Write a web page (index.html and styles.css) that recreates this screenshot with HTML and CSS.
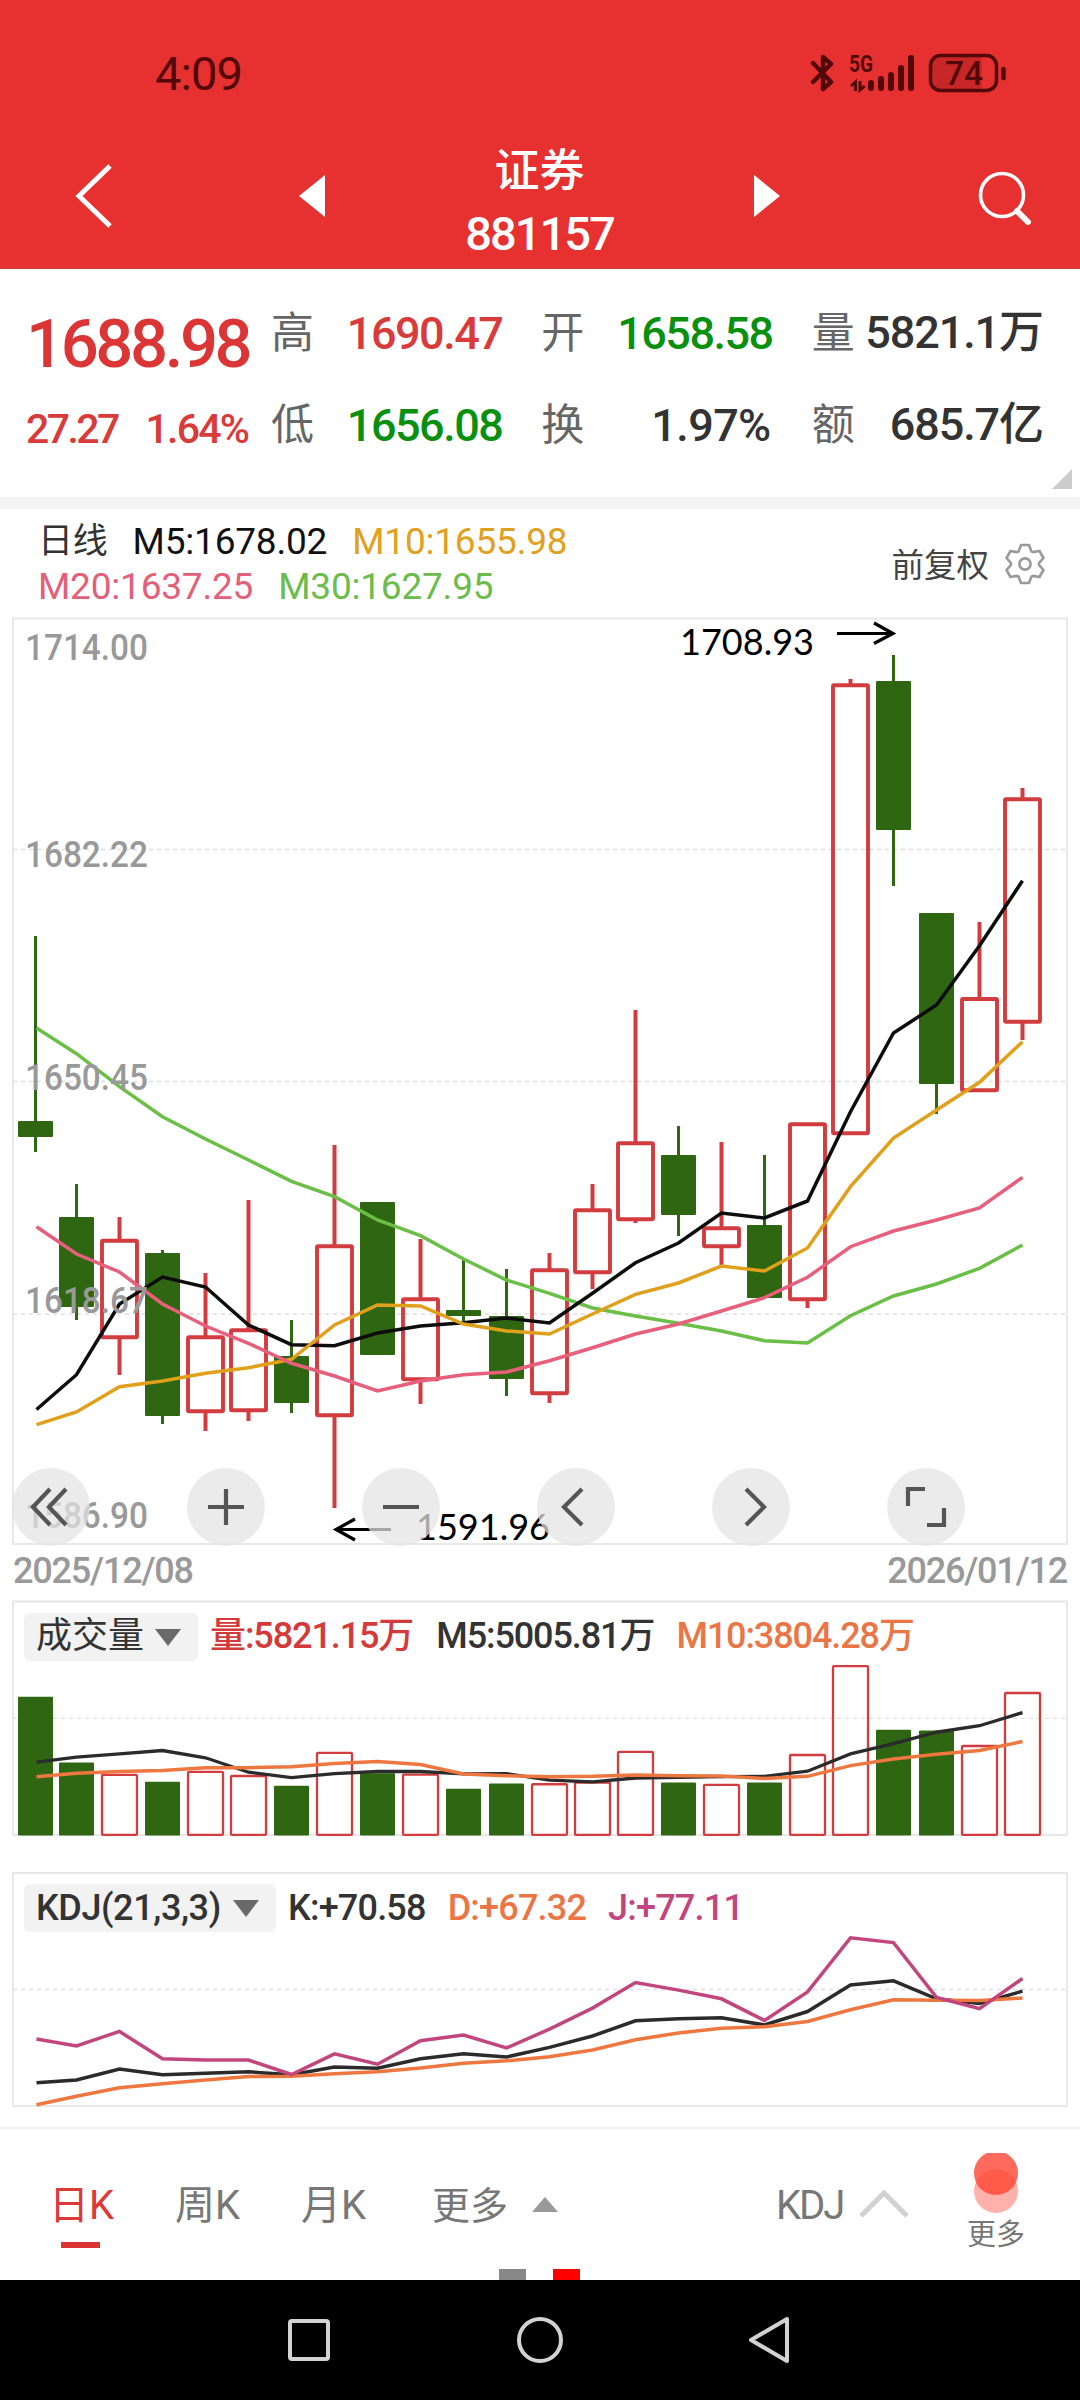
FILE: index.html
```html
<!DOCTYPE html>
<html lang="zh-CN">
<head>
<meta charset="utf-8">
<title>证券 881157</title>
<link rel="stylesheet" href="styles.css">
</head>
<body>
<div class="screen">
  <header class="top">
    <div class="status">
      <span class="clock">4:09</span>
      <svg class="status-icons" width="200" height="46" viewBox="0 0 200 46">
        <g fill="none" stroke="#520709" stroke-width="4.4" stroke-linecap="round" stroke-linejoin="round">
          <path d="M3 14 L21 33 L13 40 V8 L21 15 L3 33"/>
        </g>
        <text class="net" x="39" y="23" textLength="24" lengthAdjust="spacingAndGlyphs">5G</text>
        <path d="M45.500 42 V33 L41 37 M50 32 V41 L54.500 37" fill="none" stroke="#520709" stroke-width="3"/>
        <path d="M61 34V39M71 30V39M81 26V39M91 19V39M101 9V39" stroke="#520709" stroke-width="6" stroke-linecap="round"/>
        <path d="M172 8 H130 Q122 8 122 16 V32 Q122 40 130 40 H172Z" fill="#520709" opacity=".2"/>
        <rect x="120.500" y="6.500" width="66" height="35" rx="10" fill="none" stroke="#520709" stroke-width="3.500"/>
        <path d="M193.500 20V29" stroke="#520709" stroke-width="4.500" stroke-linecap="round"/>
        <text class="bat" x="154" y="36" text-anchor="middle" textLength="38" lengthAdjust="spacingAndGlyphs">74</text>
      </svg>
    </div>
    <nav class="titlebar">
      <svg width="40" height="66" viewBox="0 0 40 66"><path d="M36 3 L5 33 L36 63" fill="none" stroke="#fff" stroke-width="5"/></svg>
      <svg width="26" height="42" viewBox="0 0 26 42"><path d="M26 0V42L0 21Z" fill="#fff"/></svg>
      <div class="title"><span class="name">证券</span><span class="code">881157</span></div>
      <svg width="26" height="42" viewBox="0 0 26 42"><path d="M0 0V42L26 21Z" fill="#fff"/></svg>
      <svg class="ic-search" width="56" height="56" viewBox="0 0 56 56"><circle cx="24" cy="25" r="21.500" fill="none" stroke="#fff" stroke-width="3.600"/><path d="M39 41 L50 52" stroke="#fff" stroke-width="6" stroke-linecap="round"/></svg>
    </nav>
  </header>

  <section class="quote">
    <div class="price">
      <strong class="last">1688.98</strong>
      <div class="chg"><span class="diff">27.27</span><span>1.64%</span></div>
    </div>
    <dl class="stats">
      <div><dt>高</dt><dd class="up">1690.47</dd></div>
      <div><dt>开</dt><dd class="down">1658.58</dd></div>
      <div><dt>量</dt><dd class="big">5821.1万</dd></div>
      <div><dt>低</dt><dd class="down">1656.08</dd></div>
      <div><dt>换</dt><dd class="pct">1.97%</dd></div>
      <div><dt>额</dt><dd class="big">685.7亿</dd></div>
    </dl>
    <svg class="corner" width="20" height="20" viewBox="0 0 20 20"><path d="M20 0V20H0Z" fill="#ccc"/></svg>
  </section>

  <section class="legend">
    <div class="ma">
      <div class="ma-row"><span class="period">日线</span><span class="m5">M5:1678.02</span><span class="m10">M10:1655.98</span></div>
      <div class="ma-row"><span class="m20">M20:1637.25</span><span class="m30">M30:1627.95</span></div>
    </div>
    <div class="adjust">
      <span>前复权</span>
      <svg width="42" height="42" viewBox="-21 -21 42 42" fill="none" stroke="#999" stroke-width="2.600" stroke-linejoin="round"><circle r="5.600"/><path d="M-6.500 -12.500 L-4 -19 H4 L6.500 -12.500 L8 -11.900 L14.500 -13 L18.500 -6 L14 -.8 V.8 L18.500 6 L14.500 13 L8 11.900 L6.500 12.500 L4 19 H-4 L-6.500 12.500 L-8 11.900 L-14.500 13 L-18.500 6 L-14 .8 V-.8 L-18.500 -6 L-14.500 -13 L-8 -11.900Z"/></svg>
    </div>
  </section>

  <section class="kline">
    <svg id="k-chart" width="1080" height="928" viewBox="0 617 1080 928"></svg>
    <div class="tools">
      <button><svg viewBox="0 0 78 78"><path d="M38 21 L21 39 L38 57 M54 21 L37 39 L54 57"/></svg></button>
      <button><svg viewBox="0 0 78 78"><path d="M21 39H57M39 21V57"/></svg></button>
      <button><svg viewBox="0 0 78 78"><path d="M21 39H57"/></svg></button>
      <button><svg viewBox="0 0 78 78"><path d="M45 21 L27 39 L45 57"/></svg></button>
      <button><svg viewBox="0 0 78 78"><path d="M34 21 L52 39 L34 57"/></svg></button>
      <button><svg viewBox="0 0 78 78"><path d="M21 38V21H38M57 40V57H40"/></svg></button>
    </div>
  </section>
  <div class="dates"><span>2025/12/08</span><span>2026/01/12</span></div>

  <section class="panel">
    <div class="panel-head">
      <span class="picker"><span class="vol-name">成交量</span><i class="caret"></i></span>
      <span class="v1">量:5821.15万</span><span class="v2">M5:5005.81万</span><span class="v3">M10:3804.28万</span>
    </div>
    <svg id="v-chart" width="1080" height="236.6" viewBox="0 1600 1080 229" preserveAspectRatio="none"></svg>
  </section>

  <section class="panel kdj">
    <div class="panel-head">
      <span class="picker wide"><span class="kdj-name">KDJ(21,3,3)</span><i class="caret"></i></span>
      <span class="k1">K:+70.58</span><span class="k2">D:+67.32</span><span class="k3">J:+77.11</span>
    </div>
    <svg id="j-chart" width="1080" height="236.6" viewBox="0 1862 1080 229" preserveAspectRatio="none"></svg>
  </section>

  <footer class="tabs">
    <span class="tab active">日K</span>
    <span class="tab">周K</span>
    <span class="tab">月K</span>
    <span class="tab more">更多<i class="tri-up"></i></span>
    <span class="ind">KDJ<svg width="50" height="28" viewBox="0 0 50 28"><path d="M2 26 L25 3 L48 26" fill="none" stroke="#d2d2d2" stroke-width="5"/></svg></span>
    <span class="fab"><svg width="46" height="62" viewBox="0 0 46 62"><circle cx="23" cy="38" r="22" fill="#ffb0ab"/><circle cx="23" cy="20" r="22" fill="#ff6a5c"/><path d="M3 29 A22 22 0 0 1 43 29 A22 22 0 0 1 3 29Z" fill="#ff5a4a"/></svg><span>更多</span></span>
    <div class="pager"><i></i><i class="on"></i></div>
  </footer>

  <div class="navbar">
    <svg width="44" height="44" viewBox="0 0 44 44"><rect x="3" y="3" width="38" height="38" rx="2"/></svg>
    <svg width="48" height="48" viewBox="0 0 48 48"><circle cx="24" cy="24" r="21"/></svg>
    <svg width="44" height="48" viewBox="0 0 44 48"><path d="M38 3V45L2 24Z"/></svg>
  </div>
</div>
<script src="charts.js"></script>
</body>
</html>
```
FILE: styles.css
```css
* { box-sizing: border-box; margin: 0; padding: 0; }
body {
  width: 1080px;
  height: 2400px;
  overflow: hidden;
  background: #fff;
  font-family: Roboto, "Noto Sans CJK SC", sans-serif;
  color: #333;
}
.screen { width: 1080px; height: 2400px; display: flex; flex-direction: column; }
i { font-style: normal; }
span, strong, dt, dd { white-space: nowrap; }

.top { height: 269px; background: #e73030; border-bottom: 1px solid #cf3a3a; color: #fff; }
.status { height: 124px; padding: 49px 70px 0 155px; display: flex; justify-content: space-between; align-items: flex-start; color: #520709; }
.clock { font-size: 47px; line-height: 50px; font-weight: 400; letter-spacing: -.9px; }
.net { font: 700 23px Roboto, sans-serif; fill: #520709; }
.bat { font: 500 34px Roboto, sans-serif; fill: #520709; }
.titlebar { height: 144px; display: grid; grid-template-columns: 225px 26px 429px 26px 1fr; align-items: center; padding: 0 46px 0 74px; }
.ic-search { justify-self: end; margin-top: 3px; }
.title { display: flex; flex-direction: column; align-items: center; padding-top: 13px; }
.name { font-size: 45px; line-height: 62px; font-weight: 500; }
.code { font-size: 47px; line-height: 62px; font-weight: 500; letter-spacing: -2px; }

.quote { position: relative; height: 228px; padding: 32px 37px 0 26px; display: flex; }
.price { flex: none; width: 245px; }
.last { display: block; font-size: 67px; line-height: 84px; font-weight: 500; letter-spacing: -3.4px; color: #db3535; padding-top: 1px; }
.chg { display: flex; gap: 28px; font-size: 41px; line-height: 86px; font-weight: 500; letter-spacing: -1.8px; color: #d93a3a; }
.diff { letter-spacing: -2.6px; }
.stats { flex: 1; display: grid; grid-template-columns: repeat(3, 1fr); column-gap: 39px; grid-auto-rows: 92px; }
.stats > div { display: flex; justify-content: space-between; height: 64px; line-height: 64px; align-items: center; }
.stats dt { font-size: 43px; height: 64px; color: #666; }
.stats dd { font-size: 45px; font-weight: 500; height: 62px; letter-spacing: -1.5px; color: #333; }
.stats dd.up { color: #d93a3a; }
.stats dd.down { color: #0a900f; }
.stats dd.big { letter-spacing: -1.1px; height: 64px; }
.stats dd.pct { letter-spacing: -.6px; padding-right: 2px; }
.corner { position: absolute; right: 8px; bottom: 8px; }

.legend { height: 120px; border-top: 12px solid #f4f4f4; padding: 10px 34px 0 38px; display: flex; justify-content: space-between; }
.ma-row { display: flex; gap: 25px; height: 45px; line-height: 46px; font-size: 37px; letter-spacing: -.2px; }
.period { font-size: 35px; }
.m5 { color: #111; }
.m10 { color: #e0a020; }
.m20 { color: #e26079; }
.m30 { color: #6cbc4c; }
.adjust { display: flex; align-items: center; gap: 15px; height: 90px; font-size: 32.500px; color: #444; }
.adjust span { margin-top: -4px; }

.kline { position: relative; height: 928px; }
.kline > svg, .panel > svg { display: block; }
.tools { position: absolute; left: 12px; top: 851px; display: flex; gap: 97px; }
.tools button { width: 78px; height: 78px; border: 0; border-radius: 50%; background: rgba(228, 228, 228, .73); }
.tools svg { display: block; width: 78px; height: 78px; fill: none; stroke: #555; stroke-width: 4.2; }
.dates { height: 55px; padding: 1px 13px 0 13px; display: flex; justify-content: space-between; font-size: 36px; line-height: 50px; font-weight: 500; letter-spacing: -1.2px; color: #999; }

.panel { position: relative; height: 271px; }
.panel.kdj { height: 256px; }
.panel-head { position: absolute; left: 24px; top: 13px; display: flex; align-items: center; height: 48px; font-size: 36px; line-height: 42px; font-weight: 500; letter-spacing: -1.1px; }
.panel-head > span:not(.picker) { margin-top: -3px; }
.kdj .panel-head > span:not(.picker) { margin-top: 0; }
.picker { height: 48px; width: 174px; padding: 0 17px 0 12px; margin-right: 12px; background: #f2f2f2; border-radius: 6px; display: flex; justify-content: space-between; align-items: center; }
.picker.wide { width: 252px; }
.vol-name { font-size: 36px; font-weight: 400; letter-spacing: 0; margin-top: -3px; }
.kdj-name { letter-spacing: -.4px; }
.caret { border: 13px solid transparent; border-top: 17px solid #6a6a6a; border-bottom: 0; }
.v1 { color: #d43a3a; margin-right: 23px; }
.v2 { margin-right: 22px; }
.v3, .k2 { color: #ea7645; }
.kdj .panel-head { letter-spacing: -.8px; }
.k1, .k2 { margin-right: 22px; }
.k3 { color: #c2457e; }

.axis { font: 500 36px Roboto, sans-serif; fill: #999; }
.mark { font: 400 37px Lato, sans-serif; fill: #000; }

.tabs { position: relative; height: 153px; border-top: 2px solid #eee; display: flex; color: #777; font-size: 40px; padding: 47px 0 0 49px; line-height: 60px; }
.tab { position: relative; flex: none; width: 126px; }
.tab.active { color: #db3a38; }
.tab.active::after { content: ""; position: absolute; left: 12px; top: 66px; width: 39px; height: 6px; background: #db3333; }
.tab.more { display: flex; align-items: center; gap: 24px; height: 60px; width: 349px; padding-left: 5px; font-size: 38px; }
.tri-up { margin-top: -3px; border: 13px solid transparent; border-bottom: 15px solid #999; border-top: 0; }
.ind { display: flex; flex: none; align-items: center; gap: 16px; height: 60px; width: 191px; letter-spacing: -2px; }
.ind svg { margin-top: -4px; }
.fab { margin-top: -23px; display: flex; flex-direction: column; align-items: center; width: 58px; font-size: 29px; line-height: 40px; letter-spacing: 0; }
.pager { position: absolute; left: 499px; bottom: 0; display: flex; gap: 27px; }
.pager i { width: 27px; height: 11px; background: #888; }
.pager i.on { background: #f00; }

.navbar { height: 120px; background: #000; display: flex; justify-content: center; align-items: center; gap: 185px; }
.navbar svg { fill: none; stroke: #d2d2d2; stroke-width: 4; stroke-linejoin: round; }
```
FILE: charts.js
```js
const NS = 'http://www.w3.org/2000/svg';
const RED = '#d23c3f', GREEN = '#2f6612';
const xs = [35.5, 76.5];
for (let i = 2; i < 24; i++) xs.push(119.5 + (i - 2) * 43);

function add(svg, tag, attrs, text) {
  const el = document.createElementNS(NS, tag);
  for (const k in attrs) el.setAttribute(k, attrs[k]);
  if (text) el.textContent = text;
  svg.appendChild(el);
}
function frame(svg, top, bottom, grid) {
  add(svg, 'rect', {x: 13, y: top, width: 1054, height: bottom - top, fill: 'none', stroke: '#e8e8e8', 'stroke-width': 2});
  grid.forEach(y => add(svg, 'path', {d: `M13 ${y}H1067`, stroke: '#dedede', 'stroke-width': 1.3, 'stroke-dasharray': '4 4'}));
}
function line(svg, ys, color, w) {
  add(svg, 'polyline', {points: ys.map((y, i) => (i ? xs[i] : 36.5) + ',' + y).join(' '), fill: 'none', stroke: color, 'stroke-width': w});
}
function body(svg, x, top, bottom, red, w) {
  add(svg, 'rect', {x: x - 17.5, y: top, width: 35, height: bottom - top, rx: 1,
    fill: red ? 'none' : GREEN, stroke: red ? RED : 'none', 'stroke-width': w});
}

/* [up, high, bodyTop, bodyBottom, low] */
const candles = [
  [0, 936, 1121, 1137, 1152], [0, 1184, 1217, 1307, 1320], [1, 1217, 1240.7, 1337.3, 1375],
  [0, 1250, 1253, 1416, 1424], [1, 1273, 1337.3, 1411.3, 1431], [1, 1200, 1330.3, 1410.3, 1421],
  [0, 1320, 1356, 1403, 1413], [1, 1145, 1246.3, 1415.3, 1508], [0, 1202, 1202, 1355, 1355],
  [1, 1239, 1299.3, 1379.3, 1404], [0, 1260, 1310, 1316, 1321], [0, 1269, 1316, 1379, 1396],
  [1, 1253, 1270.3, 1393.3, 1403], [1, 1184, 1210.3, 1272.3, 1289], [1, 1010, 1143.3, 1219.3, 1223],
  [0, 1126, 1155, 1215, 1236], [1, 1142, 1228.3, 1246.3, 1265], [0, 1155, 1225, 1298, 1298],
  [1, 1124.3, 1124.3, 1299.3, 1308], [1, 679, 685.3, 1133.3, 1133.3], [0, 655, 681, 830, 886],
  [0, 913, 913, 1084, 1114], [1, 922, 999, 1090.3, 1090.3], [1, 788, 799.3, 1021.7, 1040]
];
const k = document.getElementById('k-chart');
frame(k, 618.5, 1544, [849.5, 1081.5, 1314]);
candles.forEach(([up, h, t, b, l], i) => {
  const c = up ? RED : GREEN;
  add(k, 'path', {d: `M${xs[i]} ${h}V${t}M${xs[i]} ${b}V${l}`, stroke: c, 'stroke-width': up ? 4 : 3});
  body(k, xs[i], t, b, up, 3.9);
});
line(k, [1028,1053.7,1086.7,1116.7,1139,1160,1181.3,1196.7,1220,1235.7,1259,1280,1293.3,1308,1316,1323.3,1331,1340.7,1343,1315.7,1296,1284,1268.3,1245], '#6abf46', 3.5);
line(k, [1409.5,1374.7,1304,1277,1287,1325,1344.7,1345.7,1333,1326,1322.7,1318,1323,1293.3,1262.7,1243,1213,1218,1201,1111.7,1033,1005,945.7,880.7], '#0d0d0d', 3.5);
line(k, [1424.7,1412,1386.7,1381,1373.3,1367.7,1359.3,1325,1305,1306,1324,1331,1334,1314,1294.3,1283,1266,1271,1248,1186.7,1138,1110,1082.3,1041.7], '#e0a01c', 3.5);
line(k, [1226.7,1254,1272,1304,1326,1343.3,1363.3,1376,1391,1381,1374.7,1372,1360.7,1347.7,1334,1324,1311,1297.7,1277.3,1246.7,1231,1220,1208,1177.3], '#e85f7c', 3.5);
[['1714.00', 660], ['1682.22', 867], ['1650.45', 1090], ['1618.67', 1313], ['1586.90', 1528]].forEach(([t, y]) =>
  add(k, 'text', {class: 'axis', x: 25, y, textLength: 123, lengthAdjust: 'spacingAndGlyphs'}, t));
add(k, 'text', {class: 'mark', x: 680, y: 655, textLength: 134, lengthAdjust: 'spacingAndGlyphs'}, '1708.93');
add(k, 'text', {class: 'mark', x: 416, y: 1540, textLength: 134, lengthAdjust: 'spacingAndGlyphs'}, '1591.96');
add(k, 'path', {d: 'M837 633.500H893M874 623L893 633.500L874 643.500M391 1529.500H336M355 1519L336 1529.500L355 1540', fill: 'none', stroke: '#000', 'stroke-width': 3.2});

const v = document.getElementById('v-chart');
frame(v, 1601.5, 1827.5, [1714.5]);
[1693.7,1757.3,1769.3,1776,1766.3,1770.3,1779.7,1748,1767.7,1769,1782.7,1777.7,1778.3,1776.7,1747,1776.7,1779,1776.7,1750,1664,1725.7,1726.3,1741.3,1690].forEach((t, i) => {
  const up = candles[i][0];
  body(v, xs[i], t, up ? 1827.3 : 1828, up, 2.3);
});
line(v, [1757,1752,1749,1745.7,1752.7,1766.7,1772,1768,1766,1766,1768.3,1768,1774.3,1776,1772.3,1771.7,1771,1770.7,1765.7,1749,1739,1728,1721.7,1709], '#2b2b2b', 3.2);
line(v, [1771,1767.7,1766,1765,1762.3,1762.3,1761.3,1758.3,1756.3,1759.3,1768.3,1770,1771,1770.7,1769.3,1770,1770.3,1772.7,1770.7,1760.3,1754,1749.3,1745.7,1737], '#ee7740', 3.4);

const j = document.getElementById('j-chart');
frame(j, 1864, 2089.5, [1976.7]);
line(j, [2067,2064.3,2053.7,2059.3,2057.7,2056.3,2059.3,2051.7,2053,2043.7,2039,2042,2032.7,2021.7,2007,2005,2004,2011,1998,1972.3,1968.3,1985.7,1990.3,1978.3], '#2b2b2b', 3.4);
line(j, [2088.3,2080,2071.7,2068,2064.3,2061,2060.7,2058.3,2056.3,2052.7,2048,2045.7,2041.7,2035.3,2025.3,2018.7,2014.3,2012.7,2007.7,1996.3,1986.7,1987,1987.3,1985], '#ee7740', 3.4);
line(j, [2024.7,2031.3,2017.3,2043.7,2045,2045,2059,2039,2049,2026.3,2020.7,2033.3,2015,1994.7,1970,1977.3,1985.7,2006.7,1979,1926.7,1931.3,1984.3,1995.3,1966], '#c2457e', 3.4);
```
